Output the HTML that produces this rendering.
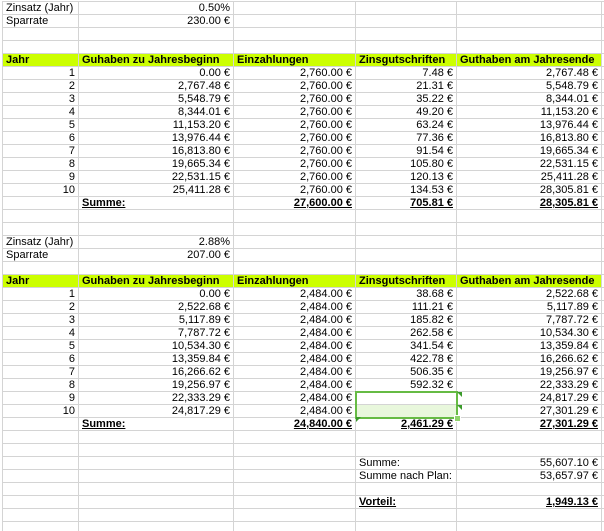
<!DOCTYPE html>
<html><head><meta charset="utf-8"><style>
html,body{margin:0;padding:0;background:#fff;width:604px;height:531px;overflow:hidden;position:relative}
table{position:absolute;left:2px;top:1px;width:619px;border-collapse:collapse;table-layout:fixed;font-family:"Liberation Sans",Arial,sans-serif;font-size:11px;color:#000}
td{height:12px;border:1px solid #d4d4d4;padding:0 3px;line-height:12px;white-space:nowrap;overflow:hidden}
td.r{text-align:right}
tr.h td{background:#ccff00;font-weight:bold}
tr.h td.f{background:#fff}
.s{font-weight:bold;text-decoration:underline}
.sel{position:absolute;left:355px;top:391px;width:99px;height:24px;border:2px solid #66bb44;box-sizing:content-box}
.sel2{position:absolute;left:357px;top:405px;width:99px;height:12px;background:#e8f7dc}
.hd{position:absolute;left:454px;top:415px;width:5px;height:5px;background:#8fd36a;border:1px solid #fff}
.tri{position:absolute;width:0;height:0;border-top:5px solid #3a9a2a;border-left:5px solid transparent}
</style></head><body>
<table>
<colgroup><col style="width:76px"><col style="width:155px"><col style="width:122px"><col style="width:101px"><col style="width:145px"><col style="width:20px"></colgroup>
<tr><td>Zinsatz (Jahr)</td><td class="r">0.50%</td><td></td><td></td><td></td><td></td></tr>
<tr><td>Sparrate</td><td class="r">230.00 €</td><td></td><td></td><td></td><td></td></tr>
<tr><td></td><td></td><td></td><td></td><td></td><td></td></tr>
<tr><td></td><td></td><td></td><td></td><td></td><td></td></tr>
<tr class="h"><td>Jahr</td><td>Guhaben zu Jahresbeginn</td><td>Einzahlungen</td><td>Zinsgutschriften</td><td>Guthaben am Jahresende</td><td class="f"></td></tr>
<tr><td class="r">1</td><td class="r">0.00 €</td><td class="r">2,760.00 €</td><td class="r">7.48 €</td><td class="r">2,767.48 €</td><td></td></tr>
<tr><td class="r">2</td><td class="r">2,767.48 €</td><td class="r">2,760.00 €</td><td class="r">21.31 €</td><td class="r">5,548.79 €</td><td></td></tr>
<tr><td class="r">3</td><td class="r">5,548.79 €</td><td class="r">2,760.00 €</td><td class="r">35.22 €</td><td class="r">8,344.01 €</td><td></td></tr>
<tr><td class="r">4</td><td class="r">8,344.01 €</td><td class="r">2,760.00 €</td><td class="r">49.20 €</td><td class="r">11,153.20 €</td><td></td></tr>
<tr><td class="r">5</td><td class="r">11,153.20 €</td><td class="r">2,760.00 €</td><td class="r">63.24 €</td><td class="r">13,976.44 €</td><td></td></tr>
<tr><td class="r">6</td><td class="r">13,976.44 €</td><td class="r">2,760.00 €</td><td class="r">77.36 €</td><td class="r">16,813.80 €</td><td></td></tr>
<tr><td class="r">7</td><td class="r">16,813.80 €</td><td class="r">2,760.00 €</td><td class="r">91.54 €</td><td class="r">19,665.34 €</td><td></td></tr>
<tr><td class="r">8</td><td class="r">19,665.34 €</td><td class="r">2,760.00 €</td><td class="r">105.80 €</td><td class="r">22,531.15 €</td><td></td></tr>
<tr><td class="r">9</td><td class="r">22,531.15 €</td><td class="r">2,760.00 €</td><td class="r">120.13 €</td><td class="r">25,411.28 €</td><td></td></tr>
<tr><td class="r">10</td><td class="r">25,411.28 €</td><td class="r">2,760.00 €</td><td class="r">134.53 €</td><td class="r">28,305.81 €</td><td></td></tr>
<tr><td></td><td><span class="s">Summe:</span></td><td class="r"><span class="s">27,600.00 €</span></td><td class="r"><span class="s">705.81 €</span></td><td class="r"><span class="s">28,305.81 €</span></td><td></td></tr>
<tr><td></td><td></td><td></td><td></td><td></td><td></td></tr>
<tr><td></td><td></td><td></td><td></td><td></td><td></td></tr>
<tr><td>Zinsatz (Jahr)</td><td class="r">2.88%</td><td></td><td></td><td></td><td></td></tr>
<tr><td>Sparrate</td><td class="r">207.00 €</td><td></td><td></td><td></td><td></td></tr>
<tr><td></td><td></td><td></td><td></td><td></td><td></td></tr>
<tr class="h"><td>Jahr</td><td>Guhaben zu Jahresbeginn</td><td>Einzahlungen</td><td>Zinsgutschriften</td><td>Guthaben am Jahresende</td><td class="f"></td></tr>
<tr><td class="r">1</td><td class="r">0.00 €</td><td class="r">2,484.00 €</td><td class="r">38.68 €</td><td class="r">2,522.68 €</td><td></td></tr>
<tr><td class="r">2</td><td class="r">2,522.68 €</td><td class="r">2,484.00 €</td><td class="r">111.21 €</td><td class="r">5,117.89 €</td><td></td></tr>
<tr><td class="r">3</td><td class="r">5,117.89 €</td><td class="r">2,484.00 €</td><td class="r">185.82 €</td><td class="r">7,787.72 €</td><td></td></tr>
<tr><td class="r">4</td><td class="r">7,787.72 €</td><td class="r">2,484.00 €</td><td class="r">262.58 €</td><td class="r">10,534.30 €</td><td></td></tr>
<tr><td class="r">5</td><td class="r">10,534.30 €</td><td class="r">2,484.00 €</td><td class="r">341.54 €</td><td class="r">13,359.84 €</td><td></td></tr>
<tr><td class="r">6</td><td class="r">13,359.84 €</td><td class="r">2,484.00 €</td><td class="r">422.78 €</td><td class="r">16,266.62 €</td><td></td></tr>
<tr><td class="r">7</td><td class="r">16,266.62 €</td><td class="r">2,484.00 €</td><td class="r">506.35 €</td><td class="r">19,256.97 €</td><td></td></tr>
<tr><td class="r">8</td><td class="r">19,256.97 €</td><td class="r">2,484.00 €</td><td class="r">592.32 €</td><td class="r">22,333.29 €</td><td></td></tr>
<tr><td class="r">9</td><td class="r">22,333.29 €</td><td class="r">2,484.00 €</td><td></td><td class="r">24,817.29 €</td><td></td></tr>
<tr><td class="r">10</td><td class="r">24,817.29 €</td><td class="r">2,484.00 €</td><td></td><td class="r">27,301.29 €</td><td></td></tr>
<tr><td></td><td><span class="s">Summe:</span></td><td class="r"><span class="s">24,840.00 €</span></td><td class="r"><span class="s">2,461.29 €</span></td><td class="r"><span class="s">27,301.29 €</span></td><td></td></tr>
<tr><td></td><td></td><td></td><td></td><td></td><td></td></tr>
<tr><td></td><td></td><td></td><td></td><td></td><td></td></tr>
<tr><td></td><td></td><td></td><td>Summe:</td><td class="r">55,607.10 €</td><td></td></tr>
<tr><td></td><td></td><td></td><td>Summe nach Plan:</td><td class="r">53,657.97 €</td><td></td></tr>
<tr><td></td><td></td><td></td><td></td><td></td><td></td></tr>
<tr><td></td><td></td><td></td><td><span class="s">Vorteil:</span></td><td class="r"><span class="s">1,949.13 €</span></td><td></td></tr>
<tr><td></td><td></td><td></td><td></td><td></td><td></td></tr>
<tr><td></td><td></td><td></td><td></td><td></td><td></td></tr>
</table>
<div class="sel2"></div>
<div class="sel"></div>
<div class="hd"></div>
<div class="tri" style="left:457px;top:392px"></div>
<div class="tri" style="left:457px;top:405px"></div>
<div style="position:absolute;left:356px;top:417px;width:0;height:0;border-top:5px solid #3a9a2a;border-right:5px solid transparent"></div>
</body></html>
